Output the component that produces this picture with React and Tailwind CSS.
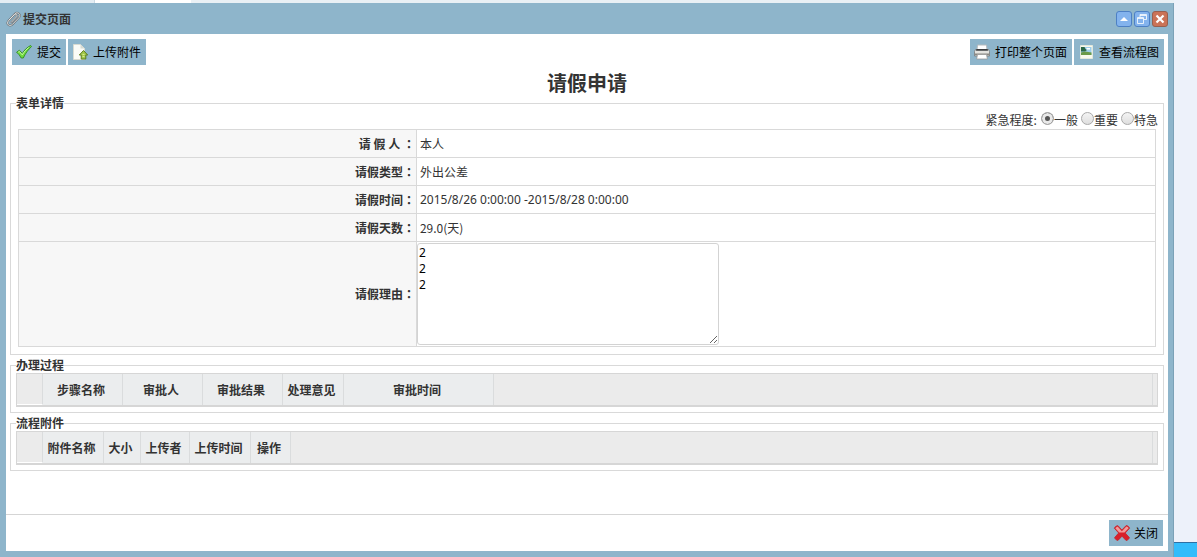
import { useState } from "react"

const LEVELS = ["一般", "重要", "特急"]

const STEP_COLUMNS = [
  { label: "步骤名称", width: "w-20" },
  { label: "审批人", width: "w-20" },
  { label: "审批结果", width: "w-20" },
  { label: "处理意见", width: "w-[61px]" },
  { label: "审批时间", width: "w-[150px]" },
]

const FILE_COLUMNS = [
  { label: "附件名称", width: "w-[61px]" },
  { label: "大小", width: "w-[37px]" },
  { label: "上传者", width: "w-[49px]" },
  { label: "上传时间", width: "w-[61px]" },
  { label: "操作", width: "w-10" },
]

function ClipIcon() {
  return (
    <svg width="16" height="16" viewBox="0 0 16 16" fill="none" strokeLinecap="round">
      <path d="M3.2 8.800 9 2.700c2.600-2.600 6.600 1 4 3.900l-6.700 6.900c-2.700 2.600-6.500-.5-4-3.500l6-6.200c1.600-1.500 3.600.3 2.300 2L5.300 11.300" stroke="#696d70" strokeWidth="1.900" />
      <path d="M3.2 8.800 9 2.700c2.600-2.600 6.600 1 4 3.900l-6.700 6.900c-2.700 2.600-6.500-.5-4-3.500l6-6.200c1.600-1.500 3.600.3 2.300 2L5.300 11.300" stroke="#e8e9e9" strokeWidth=".9" />
    </svg>
  )
}

function CheckIcon() {
  return (
    <svg width="16" height="16" viewBox="0 0 16 16">
      <path d="M.6 8.200 3.400 6.200l2.900 3.200C8.200 6.200 10.900 3.500 14.600 1.500l1 1C12 5.700 9.400 9.400 7.300 14H5.200C4 11.700 2.500 9.700.6 8.200Z" fill="#6fdc3e" stroke="#2f8a22" strokeWidth=".9" strokeLinejoin="round" />
      <path d="m2.300 8.100 1-.7 3 3.500C8.200 7.700 10.300 5.300 12.700 3.600" fill="none" stroke="#c9f7a5" strokeWidth="1" />
    </svg>
  )
}

function UploadIcon() {
  return (
    <svg width="16" height="16" viewBox="0 0 16 16">
      <path d="M1.500.5h7l4 4v11h-11Z" fill="#fbfbf6" stroke="#d9dbd1" />
      <path d="M8.500.5v4h4Z" fill="#d7dbd3" />
      <path d="m11.500 6.500 4.200 4.500h-1.900v4H9.200v-4H7.300Z" fill="#a4c94a" stroke="#5d7f22" strokeLinejoin="round" />
      <path d="M10.500 10.500h2M10.500 12.500h2" stroke="#d4e895" />
    </svg>
  )
}

function PrinterIcon() {
  return (
    <svg width="16" height="16" viewBox="0 0 16 16">
      <path d="M3.500 1h9l.5 5H3Z" fill="#fff" stroke="#b5babd" />
      <path d="M1.500 5.500h13l1 2v4.500h-15V7.500Z" fill="#e4e3df" stroke="#77787a" strokeWidth=".8" strokeLinejoin="round" />
      <path d="M2.500 5h11l.5 1.700H2Z" fill="#3b3e41" />
      <path d="M1 9.500h14v1.800H1Z" fill="#8b8983" />
      <path d="M3.500 10.500h9l.9 4.500H2.600Z" fill="#fff" stroke="#999" strokeWidth=".8" />
    </svg>
  )
}

function PictureIcon() {
  return (
    <svg width="16" height="16" viewBox="0 0 16 16">
      <path d="M2.500 1.500h12v13h-12Z" fill="#f8f9ec" stroke="#e2e8dc" />
      <path d="M3 3h10.500v8H3Z" fill="#9dcdea" />
      <path d="M3 3h3.500l1 2 1.500 1-2 1.500H3Z" fill="#2b6747" />
      <path d="M3 8.500 7 7.500l6.500 1V11H3Z" fill="#6a9a48" />
      <path d="M8.500 4H12v1.500H8.500Z" fill="#fff" />
    </svg>
  )
}

function CloseIcon() {
  return (
    <svg width="18" height="18" viewBox="0 0 18 18">
      <path d="M1.300 4.200C2 2.700 3.700 1.500 5 1.700L8.900 6l4.300-4.500c1.500.2 3 1.300 3.400 2.700L12.200 9l4.200 4.600c-.4 1.500-1.700 2.700-3.300 2.900L9 12.200l-4 4.200c-1.600-.1-3-1.300-3.400-2.800L5.700 9Z" fill="#d8202a" stroke="#c4232b" strokeWidth=".8" />
      <path d="M2.300 4.300C3 3.200 4 2.600 4.800 2.700L8.900 7.200l4.400-4.700c1 .2 1.900.9 2.300 1.700L11.500 8.500H6.200Z" fill="#f29a9a" />
    </svg>
  )
}

function ToolButton({ icon, iconGap = "gap-[5px]", children }) {
  return (
    <button type="button" className={`flex h-[26px] items-center bg-[#8eb5cb] pr-[5px] pl-1 text-xs leading-4 text-black hover:bg-[#a3c5d8] ${iconGap}`}>
      {icon}
      {children}
    </button>
  )
}

function WindowButton({ label, danger, children }) {
  return (
    <button
      type="button"
      aria-label={label}
      className={`flex size-4 items-center justify-center rounded-[3px] border ${danger ? "border-[#98604f] bg-[#cb7357]" : "border-[#4d80c4] bg-[#83b3ed]"}`}
    >
      <svg width="14" height="14" viewBox="0 0 14 14" fill="none" stroke="#fff">
        {children}
      </svg>
    </button>
  )
}

function Section({ title, children }) {
  return (
    <fieldset className="min-w-0 border border-[#d9d9d9] px-[5px] pb-[5px]">
      <legend className="text-xs leading-4 font-bold">{title}</legend>
      {children}
    </fieldset>
  )
}

function Colon() {
  return <span className="font-['Noto_Sans_CJK_JP',sans-serif]">：</span>
}

function Row({ label, children }) {
  return (
    <tr>
      <th scope="row" className="h-7 w-[35%] border border-[#d9d9d9] bg-[#f7f7f7] pr-px text-right font-bold">
        {label}
        <Colon />
      </th>
      <td className="border border-[#d9d9d9] px-[3px]">{children}</td>
    </tr>
  )
}

function Grid({ columns }) {
  return (
    <div className="border border-b-2 border-[#d6d6d6] bg-[#ebebeb]">
      <table className="w-full table-fixed border-separate border-spacing-0">
        <thead>
          <tr>
            <td className="h-[31px] w-[26px] border-r border-b border-r-[#dadcdd] border-b-white" />
            {columns.map((col) => (
              <th key={col.label} scope="col" className={`border-r border-[#dadcdd] bg-[#ebedee] pr-[3px] text-center font-bold whitespace-nowrap ${col.width}`}>
                {col.label}
              </th>
            ))}
            <td className="border-r border-[#dadcdd]" />
            <td className="w-1" />
          </tr>
        </thead>
      </table>
    </div>
  )
}

export default function App() {
  const [level, setLevel] = useState(LEVELS[0])
  const [reason, setReason] = useState("2\n2\n2")

  return (
    <div className="flex min-h-screen bg-[#edf1fa] font-['Noto_Sans_CJK_SC',sans-serif] text-xs leading-4 text-[#333]">
      <div className="flex min-w-0 flex-1 flex-col">
        <div className="flex h-[3px]">
          <div className="w-[95px] border-r border-[#cbd9e3] bg-[#e4edf3]" />
          <div className="w-24 bg-white" />
          <div className="flex-1 bg-[#e9f0f5]" />
        </div>
        <div className="flex flex-1 flex-col border-r border-[#7ba1b7] bg-[#8eb5cb] pr-[5px] pb-1.5 pl-1.5">
          <header className="flex h-[31px] items-center justify-between">
            <h1 className="flex items-center gap-px font-bold">
              <ClipIcon />
              提交页面
            </h1>
            <div className="flex gap-0.5">
              <WindowButton label="收起">
                <path d="M3 9h8L7 5Z" fill="#fff" stroke="none" />
              </WindowButton>
              <WindowButton label="还原">
                <path d="M5 5V2.500h6.500v5H9M2.500 5.500h6v6h-6ZM2.500 6.500h6M5 3.500h6" strokeOpacity=".8" />
              </WindowButton>
              <WindowButton label="关闭窗口" danger>
                <path d="m3.500 3.500 7 7m0-7-7 7" strokeWidth="2.200" />
              </WindowButton>
            </div>
          </header>

          <main className="flex flex-1 flex-col bg-white">
            <div className="flex-1 px-1 pb-4">
              <div className="flex justify-between pt-[5px] pl-0.5">
                <div className="flex gap-0.5">
                  <ToolButton icon={<CheckIcon />}>提交</ToolButton>
                  <ToolButton icon={<UploadIcon />}>上传附件</ToolButton>
                </div>
                <div className="flex gap-0.5">
                  <ToolButton icon={<PrinterIcon />}>打印整个页面</ToolButton>
                  <ToolButton icon={<PictureIcon />}>查看流程图</ToolButton>
                </div>
              </div>

              <h2 className="pt-1.5 text-center text-xl leading-6 font-bold">请假申请</h2>

              <div className="flex flex-col gap-0.5">
                <Section title="表单详情">
                  <div className="flex h-[18px] items-center justify-end">
                    <span className="mr-1">紧急程度:</span>
                    <div className="flex gap-[3px]">
                      {LEVELS.map((name) => (
                        <label key={name} className="flex">
                          <input
                            type="radio"
                            name="level"
                            checked={level === name}
                            onChange={() => setLevel(name)}
                            className="size-[13px] appearance-none rounded-full border border-[#a9a9a9] bg-linear-to-b from-[#f4f4f4] to-[#dedede] checked:bg-[#555] checked:bg-none checked:inset-ring-3 checked:inset-ring-[#e9e9e9]"
                          />
                          {name}
                        </label>
                      ))}
                    </div>
                  </div>
                  <div className="px-0.5 pb-0.5">
                    <table className="w-full table-fixed border-collapse">
                      <tbody>
                        <Row label="请 假 人 ">本人</Row>
                        <Row label="请假类型">外出公差</Row>
                        <Row label="请假时间">
                          <span className="font-['Noto_Sans',sans-serif]">2015/8/26 0:00:00 -2015/8/28 0:00:00</span>
                        </Row>
                        <Row label="请假天数">29.0(天)</Row>
                        <tr>
                          <th scope="row" className="border border-[#d9d9d9] bg-[#f7f7f7] pr-px text-right font-bold">
                            <label htmlFor="reason">请假理由</label>
                            <Colon />
                          </th>
                          <td className="border border-[#d9d9d9] py-px">
                            <textarea
                              id="reason"
                              value={reason}
                              onChange={(e) => setReason(e.target.value)}
                              className="block h-[102px] w-[302px] resize rounded-[3px] border border-[#d3d3d3] px-px pt-px font-['Noto_Sans','Noto_Sans_CJK_SC',sans-serif] text-black"
                            />
                          </td>
                        </tr>
                      </tbody>
                    </table>
                  </div>
                </Section>

                <Section title="办理过程">
                  <Grid columns={STEP_COLUMNS} />
                </Section>

                <Section title="流程附件">
                  <Grid columns={FILE_COLUMNS} />
                </Section>
              </div>
            </div>

            <footer className="flex justify-end border-t border-[#d5d5d5] py-[5px] pr-[5px]">
              <ToolButton icon={<CloseIcon />} iconGap="gap-[3px]">关闭</ToolButton>
            </footer>
          </main>
        </div>
      </div>
      <div className="flex w-[23px] flex-col justify-end">
        <div className="h-[15px] border-t border-[#2d6fa3] bg-[#33bcfb]" />
      </div>
    </div>
  )
}
